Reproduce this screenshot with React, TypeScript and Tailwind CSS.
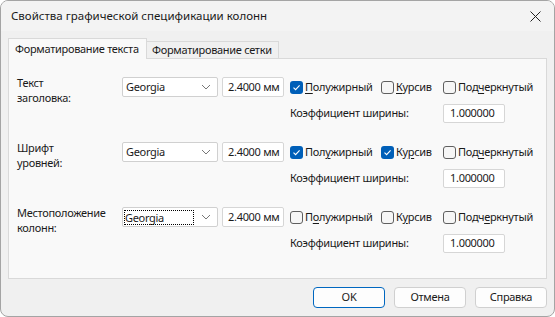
import React from 'react'

type Opt = { text: string; u: number; checked?: boolean }

const ROWS: { label: [string, string]; opts: [Opt, Opt, Opt]; focus?: boolean }[] = [
  {
    label: ['Текст', 'заголовка:'],
    opts: [
      { text: 'Полужирный', u: 0, checked: true },
      { text: 'Курсив', u: 0 },
      { text: 'Подчеркнутый', u: 3 },
    ],
  },
  {
    label: ['Шрифт', 'уровней:'],
    opts: [
      { text: 'Полужирный', u: 3, checked: true },
      { text: 'Курсив', u: 2, checked: true },
      { text: 'Подчеркнутый', u: 3 },
    ],
  },
  {
    label: ['Местоположение', 'колонн:'],
    opts: [
      { text: 'Полужирный', u: 1 },
      { text: 'Курсив', u: 1 },
      { text: 'Подчеркнутый', u: 4 },
    ],
    focus: true,
  },
]

function Underlined({ text, u }: { text: string; u: number }) {
  return (
    <span>
      {text.slice(0, u)}
      <span className="underline underline-offset-[2px]">{text[u]}</span>
      {text.slice(u + 1)}
    </span>
  )
}

function CheckBox({ opt, w }: { opt: Opt; w: string }) {
  return (
    <div className={`flex items-center whitespace-nowrap shrink-0 ${w}`}>
      {opt.checked ? (
        <span className="w-[13px] h-[13px] shrink-0 rounded-[3px] bg-[#005fb8] flex items-center justify-center">
          <svg width="9" height="9" viewBox="0 0 9 9">
            <path d="M1.5 4.6 L3.6 6.6 L7.6 2.4" fill="none" stroke="#fff" strokeWidth="1.1" />
          </svg>
        </span>
      ) : (
        <span className="w-[13px] h-[13px] shrink-0 rounded-[3px] border border-[#5f5f5f] bg-[#f6f6f6]" />
      )}
      <span className="ml-[2px]">
        <Underlined text={opt.text} u={opt.u} />
      </span>
    </div>
  )
}

function Section({ row }: { row: (typeof ROWS)[number] }) {
  return (
    <div className="flex h-[65px]">
      <div className="w-[105px] shrink-0 leading-[15px] -mt-[2px] whitespace-nowrap">
        <div>{row.label[0]}</div>
        <div>{row.label[1]}</div>
      </div>
      <div className="flex items-start shrink-0">
        <div className="w-[96px] h-[20px] bg-white border border-[#d0d0d0] rounded-[2px] flex items-center justify-between pl-[2px] pr-[6px]">
          <span className={row.focus ? 'outline outline-1 outline-dotted outline-black leading-[13px] pr-[29px]' : 'pl-[1px]'}>Georgia</span>
          <svg width="10" height="6" viewBox="0 0 10 6">
            <path d="M1 1 L5 5 L9 1" fill="none" stroke="#777" strokeWidth="1" />
          </svg>
        </div>
        <div className="ml-[4px] w-[62px] h-[20px] bg-white border border-[#d6d6d6] rounded-[2px] flex items-center pl-[5px] whitespace-nowrap">
          2.4000 мм
        </div>
      </div>
      <div className="ml-[6px] flex flex-col shrink-0">
        <div className="h-[20px] flex items-center">
          <CheckBox opt={row.opts[0]} w="w-[91px]" />
          <CheckBox opt={row.opts[1]} w="w-[62px]" />
          <CheckBox opt={row.opts[2]} w="" />
        </div>
        <div className="mt-[7px] flex items-center">
          <span className="w-[153px] whitespace-nowrap">Коэффициент ширины:</span>
          <div className="w-[62px] h-[19px] bg-white border border-[#d6d6d6] rounded-[2px] flex items-center pl-[6px]">
            1.000000
          </div>
        </div>
      </div>
    </div>
  )
}

function Button({ label, primary }: { label: string; primary?: boolean }) {
  return (
    <div
      className={`w-[72px] h-[21px] rounded-[4px] bg-[#fdfdfd] flex items-center justify-center border ${
        primary ? 'border-[#0067c0]' : 'border-[#d0d0d0]'
      }`}
    >
      {label}
    </div>
  )
}

export default function App() {
  return (
    <div className="w-[555px] h-[317px] bg-white font-['Segoe_UI','Noto_Sans',sans-serif] text-[11px] tracking-[-0.3px] text-[#1a1a1a]">
      <div className="w-full h-full flex flex-col rounded-[8px] border border-[#a4a4a4] bg-[#f0f0f0] overflow-hidden">
        <div className="h-[30px] shrink-0 bg-[#f3f3f3] flex items-center justify-between pl-[10px] pr-[13px]">
          <span className="text-[11.5px] tracking-normal">Свойства графической спецификации колонн</span>
          <svg width="11" height="11" viewBox="0 0 11 11">
            <path d="M0.5 0.5 L10.5 10.5 M10.5 0.5 L0.5 10.5" stroke="#222" strokeWidth="1" />
          </svg>
        </div>
        <div className="px-[7px] pt-[7px]">
          <div className="flex items-end h-[20px] relative z-10">
            <div className="h-[21px] w-[139px] px-[6px] flex items-center bg-[#f9f9f9] border border-b-0 border-[#d9d9d9] -mb-[1px] whitespace-nowrap">
              Форматирование текста
            </div>
            <div className="h-[17px] w-[132px] px-[5px] flex items-center bg-[#f0f0f0] border border-l-0 border-b-0 border-[#d9d9d9] whitespace-nowrap">
              Форматирование сетки
            </div>
          </div>
          <div className="h-[221px] bg-[#f9f9f9] border border-[#d9d9d9] pl-[8px] pt-[18px]">
            {ROWS.map((r, i) => (
              <Section key={i} row={r} />
            ))}
          </div>
        </div>
        <div className="flex justify-end gap-[9px] pr-[7px] pt-[8px]">
          <Button label="OK" primary />
          <Button label="Отмена" />
          <Button label="Справка" />
        </div>
      </div>
    </div>
  )
}
